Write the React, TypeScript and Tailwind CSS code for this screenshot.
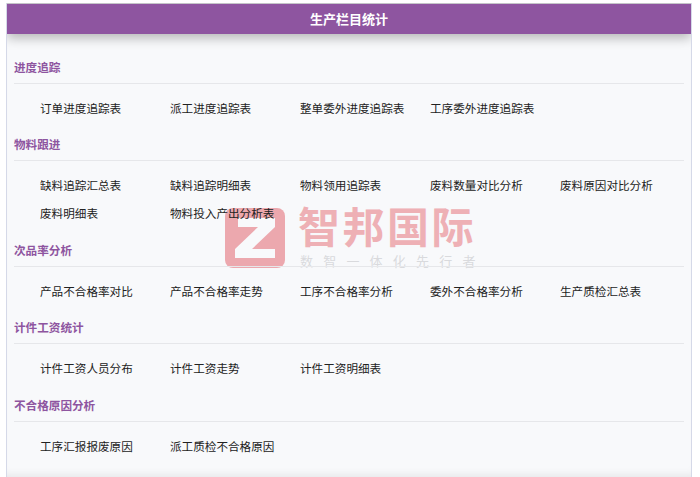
const sections = [
  { title: '进度追踪', items: ['订单进度追踪表', '派工进度追踪表', '整单委外进度追踪表', '工序委外进度追踪表'] },
  {
    title: '物料跟进',
    items: ['缺料追踪汇总表', '缺料追踪明细表', '物料领用追踪表', '废料数量对比分析', '废料原因对比分析', '废料明细表', '物料投入产出分析表'],
  },
  { title: '次品率分析', items: ['产品不合格率对比', '产品不合格率走势', '工序不合格率分析', '委外不合格率分析', '生产质检汇总表'] },
  { title: '计件工资统计', items: ['计件工资人员分布', '计件工资走势', '计件工资明细表'] },
  { title: '不合格原因分析', items: ['工序汇报报废原因', '派工质检不合格原因'] },
];

const font = { fontFamily: '"Noto Sans CJK SC", "Liberation Sans", sans-serif' };

const Watermark = () => (
  <div className="absolute left-[218px] top-[205px] flex items-start gap-[13px]">
    <div className="flex h-[60px] w-[60px] items-center justify-center rounded-[8px] bg-[#eca8ae]">
      <svg width="40" height="40" viewBox="0 0 40 40">
        <path d="M3 0h37v9L17 31h23v9H0v-9l23-22H3z" fill="#f8f9fb" />
      </svg>
    </div>
    <div className="flex flex-col">
      <div className="-mt-[8px] h-[50px] text-[42px] leading-[50px] font-bold tracking-[2.5px] whitespace-nowrap text-[#eeb0b5]">智邦国际</div>
      <div className="mt-[2.5px] pl-[2px] text-[13px] leading-[16px] tracking-[10.2px] whitespace-nowrap text-[#d9dadd]">数智一体化先行者</div>
    </div>
  </div>
);

export default function App() {
  return (
    <div className="h-[477px] w-[700px] overflow-hidden bg-white pt-[3px] pl-[6px]" style={font}>
      <div className="relative h-[474px] w-[686px] overflow-hidden border-x border-x-[#d5d9e8] bg-[#f8f9fb] shadow-[inset_0_-8px_8px_-6px_rgba(0,0,0,0.08)]">
        <div className="relative z-10 flex h-[31px] items-center justify-center border-t border-t-[#c4c4c8] bg-[#8e55a0] text-[13px] font-bold text-white shadow-[0_4px_12px_rgba(0,0,0,0.28)]">
          生产栏目统计
        </div>
        <Watermark />
        <div className="relative px-[7px] pt-[20.7px]">
          {sections.map((section) => (
            <section key={section.title} className="mb-[10.5px]">
              <h2 className="h-[29px] border-b border-b-[#e6e7ea] text-[11.6px] leading-[24px] font-bold text-[#8e55a0]">{section.title}</h2>
              <div className="grid grid-cols-[130px_130px_130px_130px_130px] pt-[10px] pl-[26px]">
                {section.items.map((item) => (
                  <div key={item} className="h-[28px] text-[11.6px] leading-[28px] whitespace-nowrap text-[#222222]">{item}</div>
                ))}
              </div>
            </section>
          ))}
        </div>
      </div>
    </div>
  );
}
